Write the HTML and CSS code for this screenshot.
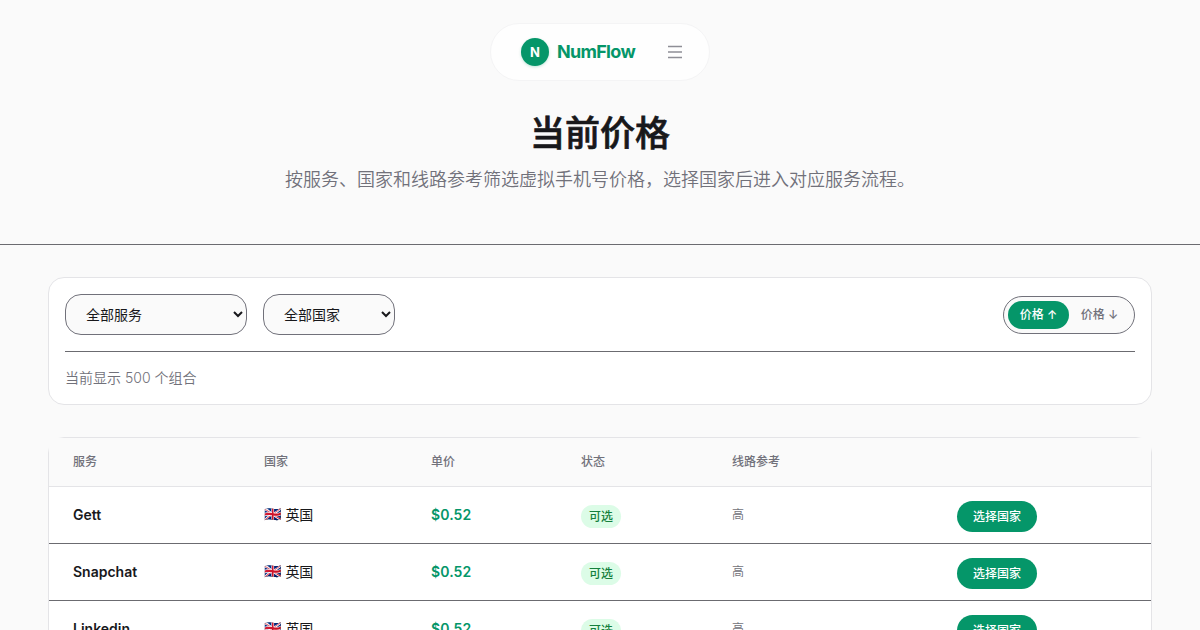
FILE: index.html
```
<!DOCTYPE html>
<html lang="zh-CN">
  <head>
    <meta charset="UTF-8" />
    <meta name="viewport" content="width=device-width, initial-scale=1.0" />
    <title>当前价格 - NumFlow</title>
    <link rel="stylesheet" href="styles.css">
  </head>
  <body>
    <header class="hero">
      <nav class="navbar">
        <a class="brand" href="#">
          <span class="logo">N</span>
          <span class="brand-name">NumFlow</span>
        </a>
        <button class="menu-btn" aria-label="菜单">
          <svg width="20" height="20" viewBox="0 0 20 20" fill="none" stroke="currentColor" stroke-width="1.5">
            <path d="M3 4.5h14M3 10h14M3 15.5h14" />
          </svg>
        </button>
      </nav>
      <h1>当前价格</h1>
      <p class="subtitle">按服务、国家和线路参考筛选虚拟手机号价格，选择国家后进入对应服务流程。</p>
    </header>

    <main class="container">
      <section class="filters">
        <div class="filter-row">
          <select class="select select-service">
            <option>全部服务</option>
          </select>
          <select class="select select-country">
            <option>全部国家</option>
          </select>
          <div class="sort">
            <button class="sort-btn active">价格 ↑</button>
            <button class="sort-btn">价格 ↓</button>
          </div>
        </div>
        <div class="count">当前显示 500 个组合</div>
      </section>

      <div class="table-card">
        <table>
          <thead>
            <tr>
              <th class="col-service">服务</th>
              <th class="col-country">国家</th>
              <th class="col-price">单价</th>
              <th class="col-status">状态</th>
              <th class="col-route">线路参考</th>
              <th></th>
            </tr>
          </thead>
          <tbody>
            <tr>
              <td class="service">Gett</td>
              <td><span class="flag">🇬🇧</span> 英国</td>
              <td class="price">$0.52</td>
              <td class="status"><span class="badge">可选</span></td>
              <td class="route">高</td>
              <td class="action"><a class="btn" href="#">选择国家</a></td>
            </tr>
            <tr>
              <td class="service">Snapchat</td>
              <td><span class="flag">🇬🇧</span> 英国</td>
              <td class="price">$0.52</td>
              <td class="status"><span class="badge">可选</span></td>
              <td class="route">高</td>
              <td class="action"><a class="btn" href="#">选择国家</a></td>
            </tr>
            <tr>
              <td class="service">Linkedin</td>
              <td><span class="flag">🇬🇧</span> 英国</td>
              <td class="price">$0.52</td>
              <td class="status"><span class="badge">可选</span></td>
              <td class="route">高</td>
              <td class="action"><a class="btn" href="#">选择国家</a></td>
            </tr>
          </tbody>
        </table>
      </div>
    </main>
  </body>
</html>
```
FILE: styles.css
```
* {
  box-sizing: border-box;
}
html {
  overflow: hidden;
}
body {
  margin: 0;
  height: 630px;
  overflow: hidden;
  background: #fafafa;
  color: #18181b;
  font-family: Inter, "Noto Sans CJK SC", "Noto Color Emoji", sans-serif;
  font-size: 14px;
}
a {
  text-decoration: none;
}
button,
select {
  font-family: inherit;
}

/* header */
.hero {
  display: flex;
  flex-direction: column;
  align-items: center;
  height: 245px;
  padding-top: 23px;
  border-bottom: 1px solid #6b6b70;
}
.navbar {
  display: flex;
  align-items: center;
  justify-content: space-between;
  width: 220px;
  height: 58px;
  padding: 0 24px 0 30px;
  background: #fefefe;
  border: 1px solid #f4f4f5;
  border-radius: 29px;
}
.brand {
  display: flex;
  align-items: center;
  gap: 8px;
  color: #059669;
}
.logo {
  display: flex;
  align-items: center;
  justify-content: center;
  width: 28px;
  height: 28px;
  border-radius: 50%;
  background: #059669;
  color: #fff;
  font-size: 13px;
  font-weight: 700;
  box-shadow: 0 1px 3px rgba(5, 150, 105, 0.25);
}
.brand-name {
  padding-bottom: 1px;
  font-size: 18px;
  font-weight: 700;
  letter-spacing: -0.7px;
}
.menu-btn {
  display: flex;
  padding: 0;
  border: 0;
  background: none;
  color: #8e8e96;
}
h1 {
  margin: 26px 0 0;
  font-size: 35px;
  line-height: 52px;
  font-weight: 500;
  -webkit-text-stroke: 0.7px #18181b;
}
.subtitle {
  margin: 7px 0 0;
  font-size: 18px;
  line-height: 28px;
  font-weight: 350;
  color: #71717a;
}

.container {
  padding: 32px 48px 0;
}

/* filter panel */
.filters {
  height: 128px;
  padding: 16px;
  background: #fff;
  border: 1px solid #e4e4e7;
  border-radius: 16px;
}
.filter-row {
  display: flex;
  align-items: center;
  gap: 16px;
  padding-bottom: 16px;
  border-bottom: 1px solid #6b6b70;
}
.select {
  height: 41px;
  padding: 0 0 0 16px;
  border: 1px solid #71717a;
  border-radius: 16px;
  background: #fafafa;
  color: #18181b;
  font-size: 14px;
}
.select-service {
  width: 182px;
}
.select-country {
  width: 132px;
}
.sort {
  display: flex;
  height: 38px;
  margin-left: auto;
  padding: 4px;
  border: 1px solid #71717a;
  border-radius: 19px;
  background: #fafafa;
}
.sort-btn {
  width: 61px;
  padding: 0 0 2px;
  border: 0;
  border-radius: 14px;
  background: none;
  color: #71717a;
  font-size: 12px;
  font-weight: 500;
}
.sort-btn.active {
  background: #059669;
  color: #fff;
}
.count {
  padding-top: 16px;
  line-height: 20px;
  font-weight: 350;
  color: #71717a;
}

/* price table */
.table-card {
  margin-top: 32px;
  background: #fff;
  border: 1px solid #e4e4e7;
  border-radius: 16px;
}
table {
  width: 100%;
  table-layout: fixed;
  border-spacing: 0;
}
th,
td {
  padding: 0 24px 2px;
  text-align: left;
}
th {
  height: 49px;
  padding-bottom: 3px;
  background: #fafafa;
  border-bottom: 1px solid #e4e4e7;
  color: #71717a;
  font-size: 12px;
  font-weight: 500;
}
td {
  height: 57px;
  background: #fff;
  border-bottom: 1px solid #6b6b70;
}
.col-service {
  width: 191px;
}
.col-country {
  width: 167px;
}
.col-price {
  width: 151px;
}
.col-status {
  width: 150px;
  padding-left: 23px;
}
.col-route {
  width: 225px;
}
.service {
  font-weight: 600;
}
.flag {
  position: relative;
  top: -1px;
}
.price {
  color: #059669;
  font-weight: 600;
  letter-spacing: 0.1px;
}
.status {
  padding: 3px 23px 0;
}
.badge {
  display: inline-block;
  padding: 0 8px;
  border-radius: 12px;
  background: #dcfce7;
  color: #15803d;
  font-size: 12px;
  line-height: 23px;
  font-weight: 500;
}
.route {
  padding-bottom: 3px;
  color: #71717a;
  font-size: 12px;
  font-weight: 350;
}
.action {
  padding: 3px 24px 0;
}
.btn {
  display: inline-block;
  padding: 0 16px;
  border-radius: 16px;
  background: #059669;
  color: #fff;
  font-size: 12px;
  line-height: 31px;
  font-weight: 500;
}
```
